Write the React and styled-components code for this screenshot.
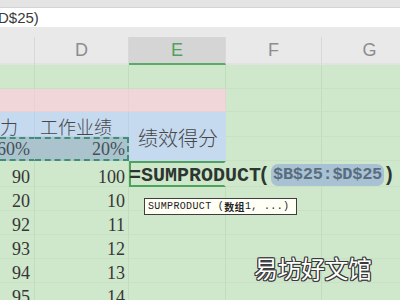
import React from "react"
import styled, { createGlobalStyle } from "styled-components"

const GlobalStyle = createGlobalStyle`
  html, body {
    margin: 0;
    padding: 0;
  }
  body {
    width: 400px;
    height: 300px;
    overflow: hidden;
    background: #cfe7cb;
  }
`

const Screen = styled.div`
  position: relative;
  width: 400px;
  height: 300px;
  overflow: hidden;
  background: #cfe7cb;
`

const TopStrip = styled.div`
  height: 7px;
  background: #e4e4e4;
  border-bottom: 1px solid #d4d4d4;
`

const FormulaBar = styled.div`
  height: 19px;
  background: #fff;
  display: flex;
  align-items: center;
  padding-left: 0;
  font: 15px "Liberation Sans", "Noto Sans CJK SC", sans-serif;
  color: #3a3a3a;
  span {
    margin-left: -2px;
  }
`

const HeaderGap = styled.div`
  height: 10px;
  background: #e9e9e9;
`

const Sheet = styled.div`
  display: grid;
  grid-template-columns: 35px 94px 97px 96px 96px;
  grid-template-rows: 28px 24px 23px 25px 24px 26px repeat(5, 24px);
  width: 418px;
`

const ColHead = styled.div`
  box-sizing: border-box;
  display: flex;
  align-items: center;
  justify-content: center;
  background: ${p => (p.$active ? "#d5d5d5" : "#e9e9e9")};
  color: ${p => (p.$active ? "#4fa35d" : "#8d8d8d")};
  border-right: 1px solid #d8d8d8;
  border-bottom: 2px solid ${p => (p.$active ? "#5aab66" : "#e2e2e2")};
  font: 18px "Liberation Sans", sans-serif;
`

const Cell = styled.div`
  box-sizing: border-box;
  min-width: 0;
  display: flex;
  align-items: ${p => p.$valign || "center"};
  justify-content: ${p => (p.$align === "right" ? "flex-end" : "flex-start")};
  padding: ${p => p.$pad || "0 4px"};
  background: ${p => p.$bg || "#cfe7cb"};
  border-right: 1px solid ${p => p.$line || "#c2dcbe"};
  border-bottom: 1px solid ${p => p.$line || "#c8e1c4"};
  grid-row: ${p => (p.$span ? `span ${p.$span}` : "auto")};
  font: 18px/18px "Liberation Serif", "Noto Sans CJK SC", serif;
  color: #363636;
  white-space: nowrap;
`

const Label = styled(Cell)`
  font-family: "Noto Sans CJK SC", sans-serif;
  font-size: ${p => p.$size || 18}px;
  font-weight: 300;
  color: #474747;
`

const Picked = styled(Cell)`
  background: #abc3cd;
  border-top: 2px dashed #3f8f78;
  border-bottom: 2px dashed #3f8f78;
  border-right: ${p => (p.$edge ? "2px dashed #3f8f78" : "1px solid #abc3cd")};
  color: #445058;
`

const ActiveCell = styled.div`
  position: relative;
  z-index: 1;
  box-sizing: border-box;
  display: flex;
  align-items: center;
  padding-top: 2px;
  border: 2px solid #4ea35c;
  border-right-color: transparent;
  white-space: nowrap;
  font: bold 20px "Liberation Mono", monospace;
  color: #2c3630;
`

const Eq = styled.span`
  margin-left: -2px;
`

const Paren = styled.span`
  margin: ${p => p.$m || "0"};
`

const RefChip = styled.span`
  padding: 1px 2px 2px;
  border-radius: 7px;
  background: #a8c2d4;
  color: #5a6d7e;
  font-size: 17px;
  letter-spacing: -0.3px;
`

const Tip = styled.div`
  position: absolute;
  left: 13px;
  top: 35px;
  width: 153px;
  height: 17px;
  box-sizing: border-box;
  display: flex;
  align-items: center;
  padding-left: 3px;
  background: #fffff6;
  border: 1px solid #3e3e3e;
  font: 10px "Liberation Mono", "Noto Sans CJK SC", monospace;
  font-weight: normal;
  letter-spacing: 0.35px;
  color: #222;
  b {
    font-family: "Noto Sans CJK SC", sans-serif;
    font-weight: 700;
  }
`

const Watermark = styled.div`
  position: absolute;
  left: 254px;
  top: 256px;
  font: 24px/24px "Noto Sans CJK SC", sans-serif;
  color: #fff;
  letter-spacing: -0.5px;
  text-shadow:
    1px 0 0 #3a3a3a, -1px 0 0 #3a3a3a, 0 1px 0 #3a3a3a, 0 -1px 0 #3a3a3a,
    1px 1px 0 #3a3a3a, -1px -1px 0 #3a3a3a, 1px -1px 0 #3a3a3a, -1px 1px 0 #3a3a3a;
`

const pink = "#f1d6d9"
const blue = "#c5d9ef"

const rows = [
  ["20", "10"],
  ["92", "11"],
  ["93", "12"],
  ["94", "13"],
  ["95", "14"],
]

const App = () => (
  <Screen>
    <GlobalStyle />
    <TopStrip />
    <FormulaBar><span>D$25)</span></FormulaBar>
    <HeaderGap />
    <Sheet>
      <ColHead />
      <ColHead>D</ColHead>
      <ColHead $active>E</ColHead>
      <ColHead>F</ColHead>
      <ColHead>G</ColHead>

      <Cell /><Cell /><Cell /><Cell /><Cell />

      <Cell $bg={pink} $line="#ead0d3" />
      <Cell $bg={pink} $line="#ead0d3" />
      <Cell $bg={pink} $line="#ead0d3" />
      <Cell /><Cell />

      <Label $bg={blue} $line="#bcd1e8" $pad="3px 0 0 0">力</Label>
      <Label $bg={blue} $line="#bcd1e8" $pad="3px 0 0 5px">工作业绩</Label>
      <Label $bg={blue} $line={blue} $span={2} $size={20} $pad="4px 0 0 9px">绩效得分</Label>
      <Cell /><Cell />

      <Picked $align="right" $pad="0 4px 0 0">60%</Picked>
      <Picked $align="right" $edge $pad="0 2px 0 0">20%</Picked>
      <Cell /><Cell />

      <Cell $align="right" $valign="flex-end">90</Cell>
      <Cell $align="right" $valign="flex-end" $pad="0 3px">100</Cell>
      <ActiveCell>
        <Eq>=</Eq>SUMPRODUCT<Paren $m="0 1px 0 -3px">(</Paren>
        <RefChip>$B$25:$D$25</RefChip>
        <Paren $m="0 0 0 -1px">)</Paren>
        <Tip>SUMPRODUCT (<b>数组</b>1, ...)</Tip>
      </ActiveCell>
      <Cell /><Cell />

      {rows.map(([c, d]) => (
        <React.Fragment key={c}>
          <Cell $align="right" $valign="flex-end">{c}</Cell>
          <Cell $align="right" $valign="flex-end" $pad="0 3px">{d}</Cell>
          <Cell /><Cell /><Cell />
        </React.Fragment>
      ))}
    </Sheet>
    <Watermark>易坊好文馆</Watermark>
  </Screen>
)

export default App
